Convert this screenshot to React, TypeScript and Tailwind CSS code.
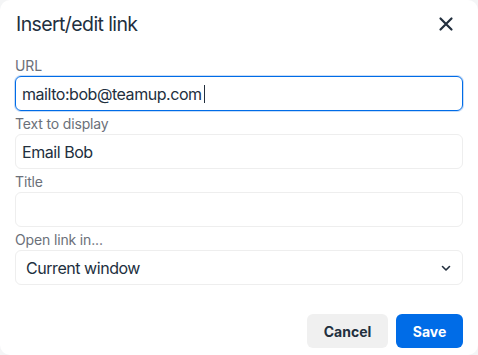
import React from "react";

const font = { fontFamily: "Inter, 'Liberation Sans', sans-serif" };

function Field({ label, children }: { label: string; children: React.ReactNode }) {
  return (
    <div className="flex flex-col">
      <label className="text-[14px] leading-4 tracking-[-0.15px] text-[#6b7079] mb-[2px]">{label}</label>
      {children}
    </div>
  );
}

export default function App() {
  return (
    <div className="w-[478px] h-[355px] bg-[#f4f5f6]" style={font}>
      <div className="w-full h-full bg-white rounded-[10px] flex flex-col text-[#222f3e]">
        {/* header */}
        <div className="flex items-start justify-between pl-4 pr-[20px] pt-[11px]">
          <h1 className="text-[19.5px] leading-[26px] tracking-[-0.6px] font-normal">Insert/edit link</h1>
          <button className="w-6 h-6 flex items-center justify-center mt-px">
            <svg width="24" height="24" viewBox="0 0 24 24" fill="none" stroke="#222f3e" strokeWidth="2.2" strokeLinecap="round">
              <path d="M6.5 6.5l11 11M17.5 6.5l-11 11" />
            </svg>
          </button>
        </div>

        {/* body */}
        <div className="flex flex-col gap-[5px] px-[15px] mt-[21px] text-[16px] tracking-[-0.45px]">
          <Field label="URL">
            <div className="h-[35px] rounded-[6px] border border-[#006ce7] shadow-[0_0_0_1px_#c7dcf7] flex items-center pl-[6px]">
              <span>mailto:bob@teamup.com</span>
              <span className="w-px h-[18px] bg-[#222f3e] ml-[2px]" />
            </div>
          </Field>
          <Field label="Text to display">
            <div className="h-[35px] rounded-[6px] border border-[#eeeeee] flex items-center pl-[6px]">
              Email Bob
            </div>
          </Field>
          <Field label="Title">
            <div className="h-[35px] rounded-[6px] border border-[#eeeeee]" />
          </Field>
          <Field label="Open link in...">
            <div className="h-[35px] rounded-[6px] border border-[#eeeeee] flex items-center justify-between pl-[10px] pr-[10px]">
              <span>Current window</span>
              <svg width="12" height="12" viewBox="0 0 12 12" fill="none" stroke="#222f3e" strokeWidth="1.6" strokeLinecap="round" strokeLinejoin="round">
                <path d="M2.5 4.5L6 8l3.5-3.5" />
              </svg>
            </div>
          </Field>
        </div>

        {/* footer */}
        <div className="flex justify-end gap-2 px-[15px] mt-[29px]">
          <button className="h-[34px] w-[81px] rounded-[6px] bg-[#f0f0f0] text-[14px] font-bold text-[#222f3e]">
            Cancel
          </button>
          <button className="h-[34px] w-[67px] rounded-[6px] bg-[#006ce7] text-[14px] font-bold text-white">
            Save
          </button>
        </div>
      </div>
    </div>
  );
}
